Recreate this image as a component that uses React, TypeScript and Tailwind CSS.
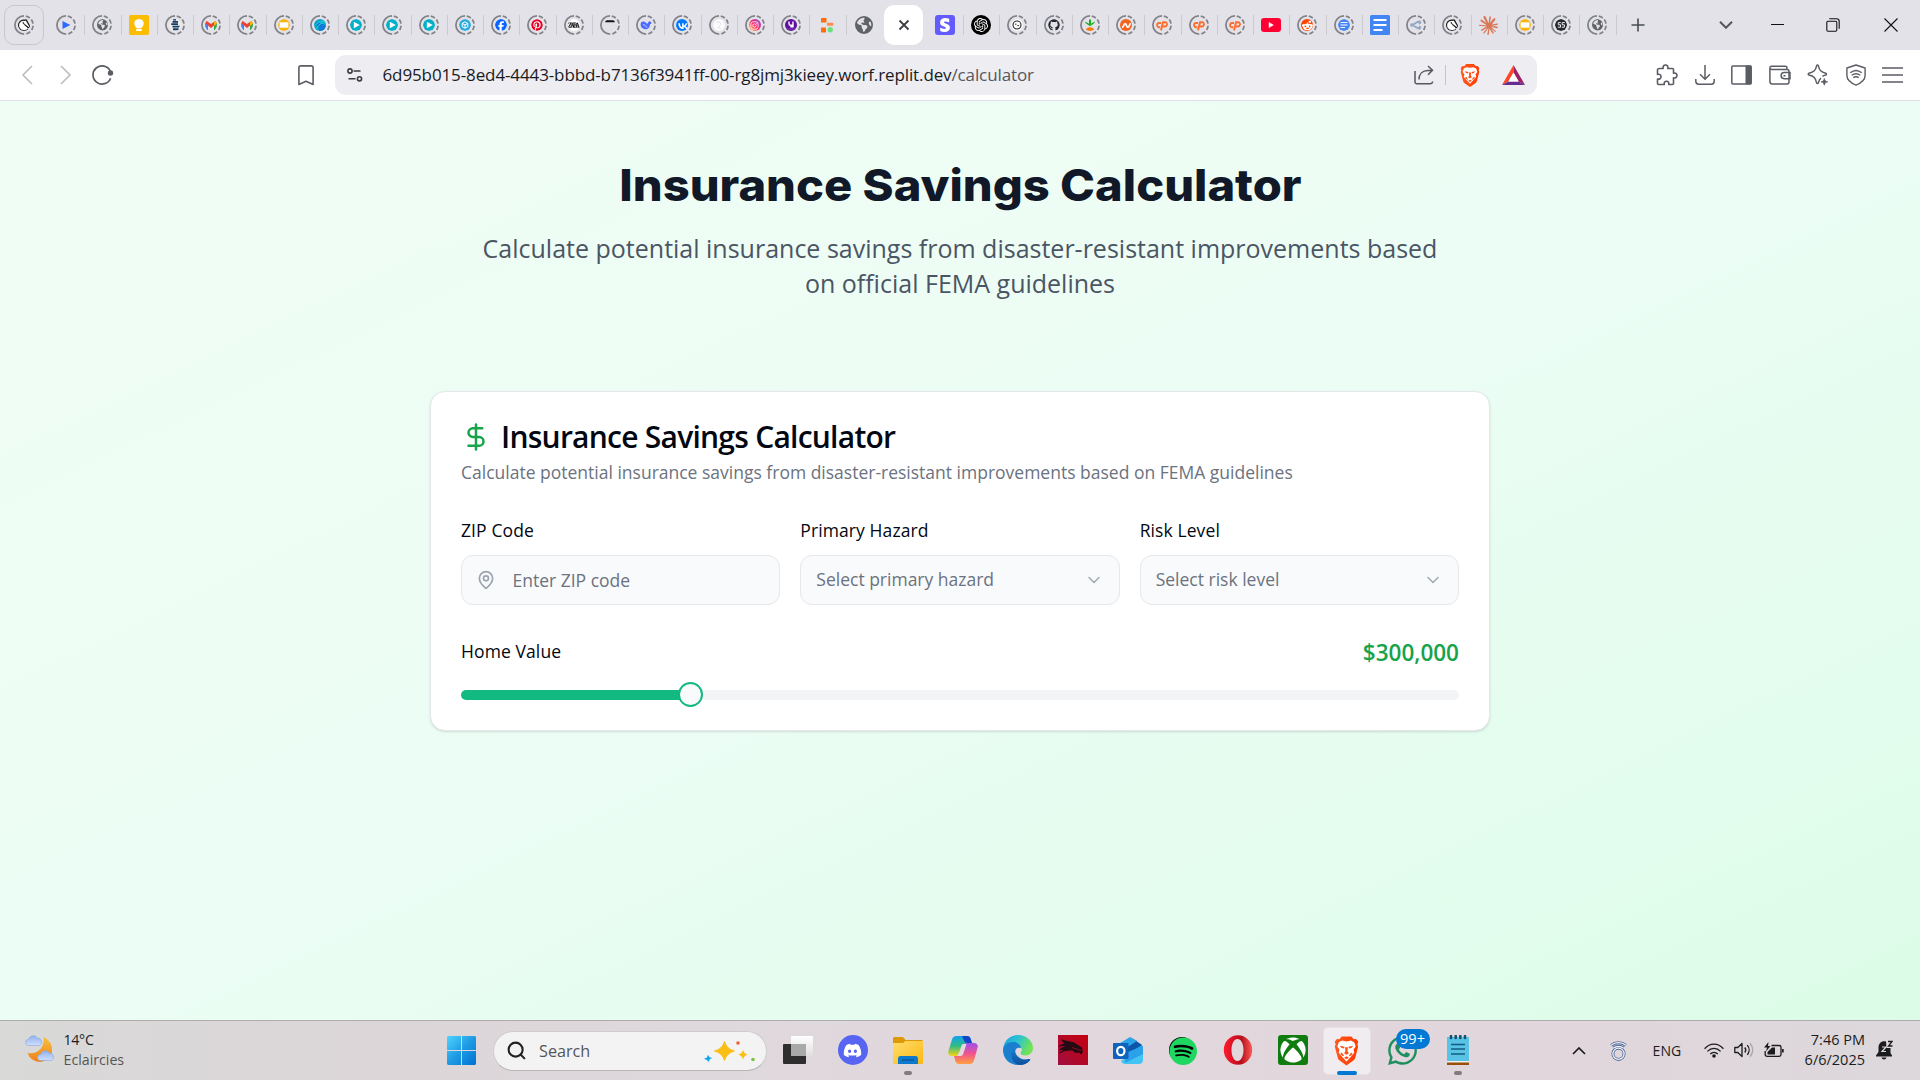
import React, { ReactNode } from "react";
import { ChevronDown, DollarSign, MapPin, Search } from "lucide-react";
import { SiLichess, SiOpenai, SiClaude, SiZara, SiNamecheap, SiVk } from "react-icons/si";
import {
  FaDiscord,
  FaEarthAmericas,
  FaFacebook,
  FaGithub,
  FaPinterest,
  FaRedditAlien,
  FaStripeS,
  FaXbox,
  FaSpotify,
  FaWhatsapp,
  FaInstagram,
} from "react-icons/fa6";

/* ---------- Browser tabs ---------- */

function Sleeping({ children }: { children?: ReactNode }) {
  return (
    <span className="grid size-5 shrink-0 place-items-center">
      <svg viewBox="0 0 20 20" className="size-5 [grid-area:1/1]" fill="none" stroke="#808287" strokeWidth="1.75">
        <path d="M10 .9a9.1 9.1 0 0 0 0 18.2" />
        <path d="M10 .9a9.1 9.1 0 0 1 0 18.2" strokeDasharray="4.4 2.2" strokeDashoffset="-1.8" />
      </svg>
      <span className="grid size-3 place-items-center overflow-hidden rounded-full [grid-area:1/1]">{children}</span>
    </span>
  );
}

const Knight = () => (
  <Sleeping>
    <span className="grid size-3 place-items-center rounded-full bg-white">
      <SiLichess className="size-3 stroke-black stroke-1 text-black" />
    </span>
  </Sleeping>
);

const Gmail = () => (
  <Sleeping>
    <svg viewBox="0 0 24 18" className="h-[9px] w-3">
      <path fill="#4285f4" d="M0 3v13a2 2 0 0 0 2 2h4V8z" />
      <path fill="#34a853" d="M24 3v13a2 2 0 0 1-2 2h-4V8z" />
      <path fill="#ea4335" d="M0 3C0 0 3-1 5 1l7 5 7-5c2-2 5-1 5 2l-1 2-11 9L1 5z" />
      <path fill="#fbbc04" d="M18 2l1-1c2-2 5-1 5 2v2l-6 5z" />
    </svg>
  </Sleeping>
);

const Play = () => (
  <Sleeping>
    <svg viewBox="0 0 12 12" className="size-3">
      <circle cx="6" cy="6" r="6" fill="#00b0c8" />
      <path d="M3.8 2.7v6.6L9.8 6z" fill="#fff" />
    </svg>
  </Sleeping>
);

const Slides = () => (
  <Sleeping>
    <svg viewBox="0 0 12 12" className="size-3">
      <circle cx="6" cy="6" r="6" fill="#f9b30b" />
      <rect x="1.6" y="3.3" width="8.8" height="5.4" fill="#fff" />
    </svg>
  </Sleeping>
);

const CPanel = () => (
  <Sleeping>
    <svg viewBox="0 0 12 12" className="size-3" fill="none" stroke="#ff6c2c" strokeWidth="1.9">
      <path d="M5 4H3.1C1.9 4 1.1 4.900 1 6s.7 2.200 1.700 2.200h1.500M5 11.500 7 3.200h2.200c1.500 0 2.200 1 1.900 2.200S9.900 7.500 8.700 7.500H7" />
    </svg>
  </Sleeping>
);

const Globe = () => (
  <Sleeping>
    <FaEarthAmericas className="size-[11.5px] text-[#5f6368]" />
  </Sleeping>
);

const TABS_BEFORE: ReactNode[] = [
  <Sleeping>
    <svg viewBox="0 0 12 12" className="size-3">
      <path d="M2.500 2v8l7.800-4z" fill="#2b6bff" />
    </svg>
  </Sleeping>,
  <Globe />,
  <svg viewBox="0 0 20 20" className="size-5">
    <rect width="20" height="20" rx="1.800" fill="#fbbc04" />
    <circle cx="10" cy="8.600" r="4.700" fill="#fff" />
    <path d="M7.500 11h5v2h-5zM7.300 13.800h5.400V16H7.300z" fill="#fff" />
  </svg>,
  <Sleeping>
    <svg viewBox="0 0 12 12" className="size-3">
      <rect width="12" height="12" fill="#f0eee2" />
      <path d="M4 0h3v1.400H4zM3.500 2h5.500v1.700H3.500zM2.200 4.300H9V6H2.200zM3.500 6.700H11L9.800 8.400H3.500zM4 9.200h5.500v2H4z" fill="#17386e" />
    </svg>
  </Sleeping>,
  <Gmail />,
  <Gmail />,
  <Slides />,
  <Sleeping>
    <svg viewBox="0 0 12 12" className="size-3">
      <rect width="12" height="12" rx="3" fill="#0ba5d0" />
      <path d="M0 5q6-4 12 2v5H5Q6 7 0 5z" fill="#1279d8" />
      <path d="M2.500 9.500q3-6 8-6M1 6q4-4 9-4" stroke="#21d1cf" fill="none" />
    </svg>
  </Sleeping>,
  <Play />,
  <Play />,
  <Play />,
  <Sleeping>
    <svg viewBox="0 0 12 12" className="size-3">
      <circle cx="6" cy="6" r="6" fill="#29abe2" />
      <path d="m6 2.800 2.800 1.600v3.200L6 9.200 3.200 7.600V4.400zM3.200 4.400 6 6l2.800-1.600M6 6v3.200" fill="none" stroke="#fff" strokeWidth="1" />
    </svg>
  </Sleeping>,
  <Sleeping>
    <span className="grid size-3 place-items-center rounded-full bg-white">
      <FaFacebook className="size-3 text-[#0866ff]" />
    </span>
  </Sleeping>,
  <Sleeping>
    <span className="grid size-3 place-items-center rounded-full bg-white">
      <FaPinterest className="size-3 text-[#e60023]" />
    </span>
  </Sleeping>,
  <Sleeping>
    <span className="grid size-3 place-items-center bg-white">
      <SiZara className="size-3 stroke-black stroke-[0.6] text-black" />
    </span>
  </Sleeping>,
  <Sleeping>
    <svg viewBox="0 0 12 12" className="size-3">
      <path d="M1.200 1.300h9.600v2H1.200z" fill="#111" />
    </svg>
  </Sleeping>,
  <Sleeping>
    <svg viewBox="0 0 12 12" className="size-3">
      <path d="M.6 5C1 2.500 3 2 5 3c1 .5 1.500 1.500 2.500 1.700C8 3 9 3 9.500 2c.5 1 1.500.8 2.500.4 0 2-1 2.600-2 2.900C9.900 8 8.500 10.500 5.500 10.300 2.500 10 .4 8 .6 5z" fill="#4d6bfe" />
      <path d="M3 5.600c2 0 3 2 4 3" stroke="#e3e2e8" strokeWidth=".9" fill="none" />
    </svg>
  </Sleeping>,
  <Sleeping>
    <span className="grid size-3 place-items-center bg-white">
      <SiVk className="size-[14px] text-[#0077ff]" />
    </span>
  </Sleeping>,
  <Sleeping>
    <svg viewBox="0 0 12 12" className="size-3">
      <circle cx="6" cy="6" r="6" fill="#fbfbfc" />
      <path d="M3 3.500 7 3l1 2.500-3 3 3 1" fill="none" stroke="#e3e3e6" strokeWidth="1" />
    </svg>
  </Sleeping>,
  <Sleeping>
    <span className="grid size-3 place-items-center bg-linear-to-tr from-[#ffb72b] via-[#f5196c] to-[#8a35e8]">
      <FaInstagram className="size-[9px] text-white" />
    </span>
  </Sleeping>,
  <Sleeping>
    <svg viewBox="0 0 12 12" className="size-3">
      <rect width="12" height="12" rx="2.500" fill="#5f0f9e" />
      <path d="M4 2.500v2.200c0 1 .7 1.600 1.700 1.600H7.500M8 2.500v5.300H5.300" fill="none" stroke="#fff" strokeWidth="1.400" />
      <path d="M2 10h8" stroke="#8d4bc0" strokeWidth=".7" />
    </svg>
  </Sleeping>,
  <svg viewBox="0 0 14 16" className="h-4 w-3.5 shrink-0">
    <rect x="1" y="1" width="5.500" height="4.500" rx=".6" fill="#ff6c0c" />
    <rect x="7" y="5.700" width="6.300" height="3" rx=".6" fill="#ff8a4a" />
    <rect x="1" y="10.500" width="5" height="5" rx=".6" fill="#ff6c0c" />
    <circle cx="10.200" cy="12.800" r="2.700" fill="#6be07f" />
  </svg>,
  <FaEarthAmericas className="size-[18px] text-[#5f6368]" />,
];

const TABS_AFTER: ReactNode[] = [
  <span className="grid size-5 place-items-center rounded-[3px] bg-[#635bff]">
    <FaStripeS className="size-3.5 text-white" />
  </span>,
  <span className="grid size-5 place-items-center rounded-full bg-black">
    <SiOpenai className="size-3.5 text-white" />
  </span>,
  <Sleeping>
    <svg viewBox="0 0 12 12" className="size-3" fill="none" stroke="#222">
      <circle cx="6" cy="6" r="6" fill="#fff" stroke="none" />
      <circle cx="6" cy="6" r="4" strokeWidth="1.100" />
      <path d="M4 5.200h1.500M6.300 6.600h1.800" strokeWidth=".9" />
    </svg>
  </Sleeping>,
  <Sleeping>
    <FaGithub className="size-3 text-[#24292f]" />
  </Sleeping>,
  <Sleeping>
    <svg viewBox="0 0 12 12" className="size-3">
      <path d="M6 7 5 4.500V.5h2v4zM6 7.300 1.500 4 1 2.500 5.500 5zM6 7.300 10.500 4 11 2.500 6.500 5z" fill="#17b01c" />
      <path d="M1.300 12C2 9.500 3.500 8.300 6 8.300S10 9.500 10.700 12z" fill="#ff7a00" />
    </svg>
  </Sleeping>,
  <Sleeping>
    <span className="grid size-3 place-items-center bg-[#f0641f]">
      <SiNamecheap className="size-[9px] text-white" />
    </span>
  </Sleeping>,
  <CPanel />,
  <CPanel />,
  <CPanel />,
  <svg viewBox="0 0 20 14" className="h-3.5 w-5">
    <rect width="20" height="14" rx="3" fill="#ff0033" />
    <path d="M7.800 4v6l5-3z" fill="#fff" />
  </svg>,
  <Sleeping>
    <span className="grid size-3 place-items-center bg-[#ff4500]">
      <FaRedditAlien className="size-[11px] text-white" />
    </span>
  </Sleeping>,
  <Sleeping>
    <svg viewBox="0 0 12 12" className="size-3">
      <circle cx="6" cy="6" r="6" fill="#4285f4" />
      <path d="M2.500 3.500h7M2.500 6h7M2.500 8.500h4.500" stroke="#fff" strokeWidth="1.200" />
    </svg>
  </Sleeping>,
  <svg viewBox="0 0 20 20" className="size-5">
    <rect width="20" height="20" rx="1.500" fill="#4285f4" />
    <path d="M3.500 5h13M3.500 10h13M3.500 15h9" stroke="#fff" strokeWidth="2.200" />
  </svg>,
  <Sleeping>
    <svg viewBox="0 0 12 12" className="size-3" fill="none" stroke="#93a8c4" strokeWidth="1.800">
      <path d="M11 3H7.500L2.500 6l5 3H11M9 1.200 11.200 3 9 4.800M9 7.200 11.200 9 9 10.800" />
      <circle cx="1.800" cy="6" r=".9" />
    </svg>
  </Sleeping>,
  <Knight />,
  <SiClaude className="size-[19px] text-[#d97757]" />,
  <Slides />,
  <Sleeping>
    <svg viewBox="0 0 12 12" className="size-3">
      <circle cx="6" cy="6" r="6" fill="#23272c" />
      <path d="M5.800 3.600H3.300v2.200h2.200v2.400H2.800M9.800 3.600H7.200v2.200h2.200v2.400H6.700" stroke="#fff" strokeWidth=".9" fill="none" />
    </svg>
  </Sleeping>,
  <Globe />,
];

function TabSlot({ children, divider = true }: { children: ReactNode; divider?: boolean }) {
  return (
    <div className="relative flex h-5 w-[36.25px] shrink-0 items-center justify-center">
      {children}
      {divider && <span className="absolute -right-px top-0 h-5 w-px bg-[#c9c9ce]" />}
    </div>
  );
}

function TabStrip() {
  return (
    <div className="flex h-[50px] items-center bg-[#e3e2e8]">
      <div className="ml-1 mr-[4.5px] flex h-10 w-[39.5px] shrink-0 items-center justify-center rounded-[10px] border border-[#c8c8cc]">
        <Knight />
      </div>
      {TABS_BEFORE.map((t, i) => (
        <TabSlot key={i} divider={i < TABS_BEFORE.length - 1}>
          {t}
        </TabSlot>
      ))}
      <div className="ml-[2px] mr-[3.5px] flex h-10 w-[39.5px] shrink-0 items-center justify-center rounded-[10px] bg-white">
        <svg viewBox="0 0 12 12" className="size-3" stroke="#3b3d42" strokeWidth="1.800">
          <path d="m1.500 1.500 9 9M10.500 1.500l-9 9" />
        </svg>
      </div>
      {TABS_AFTER.map((t, i) => (
        <TabSlot key={i}>{t}</TabSlot>
      ))}
      <svg viewBox="0 0 14 14" className="ml-[15.5px] size-3.5 shrink-0" stroke="#4a4d52" strokeWidth="1.600">
        <path d="M7 .5v13M.5 7h13" />
      </svg>
      <div className="ml-auto mr-[22px] flex items-center">
        <svg viewBox="0 0 14 8" className="mr-[37.5px] h-2 w-3.5" fill="none" stroke="#55585d" strokeWidth="2">
          <path d="m1 .8 6 6 6-6" />
        </svg>
        <svg viewBox="0 0 13 13" className="mr-[42.5px] size-[13px]" stroke="#111" strokeWidth="1">
          <path d="M0 5.500h13" />
        </svg>
        <svg viewBox="0 0 14 14" className="mr-[44px] size-3.5" fill="none" stroke="#111" strokeWidth="1.100">
          <rect x=".8" y="3.200" width="10" height="10" rx="1.200" />
          <path d="M3.300.8h7.200a2.700 2.700 0 0 1 2.700 2.700v7.200" />
        </svg>
        <svg viewBox="0 0 14 14" className="size-3.5" stroke="#111" strokeWidth="1.100">
          <path d="m.5.5 13 13M13.500.5l-13 13" />
        </svg>
      </div>
    </div>
  );
}

/* ---------- Address bar ---------- */

function BraveLion({ className }: { className?: string }) {
  return (
    <svg viewBox="0 0 26 30" className={className}>
      <defs>
        <linearGradient id="lion" x1="0" x2="1">
          <stop offset="0" stopColor="#ff5a1f" />
          <stop offset="1" stopColor="#ff3a00" />
        </linearGradient>
      </defs>
      <path d="M8 0h10l2.600 2.800 2.400-.3 2.300 3-1 2.300.8 2.700-3 11.500c-.4 1.500-1 2.300-2 3L13 30l-7.100-5c-1-.7-1.600-1.500-2-3L.9 10.500l.8-2.700-1-2.300 2.300-3 2.400.3z" fill="url(#lion)" />
      <path d="m8.500 4.200 4.500.8 4.500-.8 3.500 1.600 1.600 4.600-2.300 3 .8 3.300-3.800 4.600-4.300 4.500-4.300-4.500-3.800-4.600.8-3.300-2.300-3L5 5.800z" fill="#fff" />
      <path d="m6 9.500 5 1-.6 1.800-2.500-.5zM20 9.500l-5 1 .6 1.800 2.500-.5zM11.500 11h3l-.4 4.200 1.400 2.200L13 19l-2.500-1.600 1.400-2.200zM8 16.500l2.500 3.300-1.200.7L6.500 18zM18 16.500l-2.500 3.300 1.200.7 2.800-2.500zM13 20.500l2.500 1.400L13 23.500l-2.500-1.600z" fill="#ff5117" />
    </svg>
  );
}

function Toolbar() {
  return (
    <div className="flex h-[51px] items-center border-b border-[#dfdfe5] bg-white">
      <svg viewBox="0 0 12 20" className="ml-[21px] h-5 w-3 shrink-0" fill="none" stroke="#bcbdc2" strokeWidth="1.600">
        <path d="M11 1 2 10l9 9" />
      </svg>
      <svg viewBox="0 0 12 20" className="ml-[27px] h-5 w-3 shrink-0" fill="none" stroke="#bcbdc2" strokeWidth="1.600">
        <path d="m1 1 9 9-9 9" />
      </svg>
      <svg viewBox="0 0 22 20" className="ml-5 h-5 w-[22px] shrink-0" fill="none" stroke="#5b5d64" strokeWidth="1.700">
        <path d="M18.300 6A9.100 9.100 0 1 0 18.600 13.200" />
        <circle cx="18.500" cy="8" r="2.700" fill="#5b5d64" stroke="none" />
      </svg>
      <svg viewBox="0 0 16 21" className="ml-[184px] h-[21px] w-4 shrink-0" fill="none" stroke="#5b5d64" strokeWidth="1.600">
        <path d="M.9 19.500V2.800C.9 1.600 1.600.9 2.800.9h10.400c1.200 0 1.900.7 1.900 1.900v16.700L8 16.300z" strokeLinejoin="round" />
      </svg>
      <div className="ml-[21px] flex h-10 w-[1202px] shrink-0 items-center rounded-[11px] bg-[#ededf2]">
        <svg viewBox="0 0 16 14" className="ml-3 h-3.5 w-4" fill="none" stroke="#3b3d42" strokeWidth="1.600">
          <circle cx="3" cy="3" r="2.100" />
          <path d="M6.500 3h7M1.500 10.800h7" />
          <circle cx="12.500" cy="10.800" r="2.100" />
        </svg>
        <div className="ml-[19.5px] whitespace-nowrap text-[17px] leading-6 tracking-[-0.115px] text-[#1a1b1f]">
          6d95b015-8ed4-4443-bbbd-b7136f3941ff-00-rg8jmj3kieey.worf.replit.dev
          <span className="text-[#55575e]">/calculator</span>
        </div>
        <div className="ml-auto mr-[12px] flex items-center">
          <svg viewBox="0 0 20 20" className="mr-[11px] h-5 w-5" fill="none" stroke="#55585e" strokeWidth="1.500">
            <path d="M1 6v11c0 1 .7 1.700 1.700 1.700H16c1.500 0 2.500-.8 2.700-2.200M5 14.500C5 9 8.500 5.500 14 5.500h4M14 1l4.500 4.300L14 9.800" />
          </svg>
          <span className="mr-3.5 h-5 w-px bg-[#c4c5cb]" />
          <BraveLion className="mr-[22px] h-[23px] w-5" />
          <svg viewBox="0 0 23 20" className="h-5 w-[23px]">
            <path d="M11.500 0 0 20l6.500-3.500 5-9z" fill="#ff4724" />
            <path d="M11.500 0 23 20l-6.500-3.500-5-9z" fill="#9e1f63" />
            <path d="m0 20 6.500-3.500h10L23 20z" fill="#662d91" />
            <path d="m11.500 7.500 5.200 9H6.300z" fill="#fff" />
          </svg>
        </div>
      </div>
      <div className="ml-auto mr-[17px] flex w-[247px] items-center justify-between">
        <svg viewBox="0 0 22 22" className="size-[22px]" fill="none" stroke="#5b5d64" strokeWidth="1.600" strokeLinejoin="round">
          <path d="M3.500 4.500h3.700c-.6-2 .5-3.500 2.300-3.500s2.900 1.500 2.300 3.500h4.700c.7 0 1 .3 1 1v3.700c2-.5 3.500.5 3.500 2.300s-1.500 2.800-3.500 2.300v5.700c0 .7-.3 1-1 1h-3.800c.6-1.800-.4-3.200-2.200-3.200s-2.800 1.400-2.200 3.200H2.500c-.7 0-1-.3-1-1V15c2 .6 3.500-.5 3.500-2.300s-1.500-2.800-3.500-2.300V5.500c0-.7.300-1 2-1z" />
        </svg>
        <svg viewBox="0 0 20 20" className="size-5" fill="none" stroke="#5b5d64" strokeWidth="1.500">
          <path d="M10 0v14M5 9.200l5 5 5-5M.8 14v2.300c0 1.700 1.200 2.900 2.900 2.900h12.600c1.700 0 2.900-1.200 2.900-2.900V14" />
        </svg>
        <svg viewBox="0 0 21 20" className="h-5 w-[21px]">
          <rect x=".8" y=".9" width="19.400" height="18" rx="1" fill="#fff" stroke="#5b5d64" strokeWidth="1.500" />
          <path d="M14.500.5h5.700v18.800h-5.700z" fill="#5b5d64" />
        </svg>
        <svg viewBox="0 0 22 20" className="h-5 w-[22px]" fill="none" stroke="#5b5d64" strokeWidth="1.500">
          <path d="M18 4V2.800c0-1-.6-1.600-1.600-1.600H2.600C1.600 1.200.9 1.900.9 2.800s.7 1.700 1.700 1.700H18c1.300 0 2 .8 2 2v10.400c0 1.300-.7 2-2 2H3.200c-1.400 0-2.300-.9-2.300-2.400V3" />
          <path d="M21 7.500h-5.800a3.100 3.100 0 0 0 0 6.200H21zM14.500 10.700h2" />
        </svg>
        <svg viewBox="0 0 22 22" className="size-[22px]" fill="none" stroke="#5b5d64" strokeWidth="1.500" strokeLinejoin="round">
          <path d="M14 14.200c-1.300.9-2 2.300-2.600 4.600-.4 1-1.400 1-1.800 0C8.500 13.800 7 12 2 11c-1-.3-1-1.400 0-1.700C7 8 8.500 6.500 9.600 1.800c.4-1 1.400-1 1.800 0C12.500 6.500 14 8 18.700 9.300c1 .3 1 1.400 0 1.700-1.500.4-2.500.8-3.300 1.300" />
          <path d="M17.300 14.500c.5 2.200 1.200 2.900 3.400 3.300-2.200.5-2.900 1.200-3.400 3.400-.5-2.200-1.200-2.900-3.300-3.400 2.100-.4 2.800-1.100 3.300-3.300z" fill="#5b5d64" strokeWidth=".8" />
        </svg>
        <svg viewBox="0 0 20 22" className="h-[22px] w-5" fill="none" stroke="#5b5d64" strokeWidth="1.400">
          <path d="M10 1 .9 4v7.500c0 4.500 4 7.500 9.100 9.600 5.100-2.100 9.100-5.100 9.100-9.600V4z" strokeLinejoin="round" />
          <path d="M4.300 8.800c3.500-2.900 7.900-2.900 11.400 0M5.700 11.300c2.700-2 5.900-2 8.600 0M7.300 13.700c1.800-1.200 3.600-1.200 5.400 0" />
        </svg>
        <svg viewBox="0 0 21 18" className="h-[18px] w-[21px]" stroke="#5b5d64" strokeWidth="1.600">
          <path d="M0 2h21M0 9h21M0 16h21" />
        </svg>
      </div>
    </div>
  );
}

/* ---------- Page ---------- */

function Label({ children }: { children: ReactNode }) {
  return (
    <div className="text-[17.5px] font-medium leading-[25px] tracking-[0.1px] text-[#030712]">{children}</div>
  );
}

function SelectField({ label, placeholder }: { label: string; placeholder: string }) {
  return (
    <div className="flex flex-col gap-3">
      <Label>{label}</Label>
      <div className="flex h-[50px] items-center justify-between rounded-xl border border-gray-200 bg-[#f9fafb] px-[15px] text-[17.5px] leading-[25px] text-[#6b7280]">
        <span className="pb-[2px]">{placeholder}</span>
        <ChevronDown className="size-5 opacity-60" strokeWidth={1.8} />
      </div>
    </div>
  );
}

function Page() {
  const percent = 22.97;
  return (
    <main className="flex h-[919px] flex-col items-center bg-[linear-gradient(to_bottom_right,#f0fdf4,#ecfdf5_50%,#dcfce7)] bg-[#ecfdf5]">
      <h1 className="mt-[59px] scale-x-[1.058] font-['Inter'] text-[44.5px] font-extrabold leading-[50px] text-[#111827]">
        Insurance Savings Calculator
      </h1>
      <p className="mt-[21px] w-[960px] text-center text-[25px] leading-[35px] text-[#4b5563]">
        Calculate potential insurance savings from disaster-resistant improvements based on official FEMA guidelines
      </p>
      <section className="mt-[90px] h-[340px] w-[1060px] rounded-[15px] border border-gray-200 bg-white px-[30px] pt-[30px] shadow-sm">
        <div className="flex items-center gap-2.5">
          <DollarSign className="size-[30px] text-[#16a34a]" strokeWidth={2} />
          <h2 className="text-[30px] font-semibold leading-[30px] tracking-[-0.75px] text-[#030712]">
            Insurance Savings Calculator
          </h2>
        </div>
        <p className="mt-[7.5px] text-[17.5px] leading-[25px] text-[#6b7280]">
          Calculate potential insurance savings from disaster-resistant improvements based on FEMA guidelines
        </p>
        <div className="mt-[33.5px] grid grid-cols-3 gap-5">
          <div className="flex flex-col gap-3">
            <Label>ZIP Code</Label>
            <div className="flex h-[50px] items-center rounded-xl border border-gray-200 bg-[#f9fafb] pl-3.5 text-[17.5px] leading-[25px] text-[#6b7280]">
              <MapPin className="mr-[16.5px] size-5 text-[#9ca3af]" />
              <span>Enter ZIP code</span>
            </div>
          </div>
          <SelectField label="Primary Hazard" placeholder="Select primary hazard" />
          <SelectField label="Risk Level" placeholder="Select risk level" />
        </div>
        <div className="mt-[30px] flex h-[35px] items-center justify-between">
          <div className="pb-[2px]">
            <Label>Home Value</Label>
          </div>
          <span className="text-[22.5px] font-semibold leading-[35px] text-[#16a34a]">$300,000</span>
        </div>
        <div className="mt-[12px] flex h-[25px] items-center">
          <div className="h-2.5 rounded-l-full bg-[#12b981]" style={{ width: `calc(${percent}% - 10px)` }} />
          <div className="relative z-10 -mx-0.5 size-[25px] shrink-0 rounded-full border-2 border-[#12b981] bg-[#f9fafb]" />
          <div className="h-2.5 grow rounded-r-full bg-[#f3f4f6]" />
        </div>
      </section>
    </main>
  );
}

/* ---------- Taskbar ---------- */

function App55({ children, mark }: { children: ReactNode; mark?: boolean }) {
  return (
    <div className="relative flex h-[58px] w-[55px] shrink-0 items-center justify-center">
      {children}
      {mark && <span className="absolute bottom-[5px] left-1/2 h-1 w-2 -translate-x-1/2 rounded-full bg-[#807c80]" />}
    </div>
  );
}

function Taskbar() {
  return (
    <footer className="flex h-[60px] items-center border-t border-[#aeadad] bg-[linear-gradient(90deg,#d9d9d8,#dcd6d9_20%,#ded8dc_35%,#e1d7dc_55%,#e1d6db_80%,#dcd8dc)]">
      <div className="flex w-[447px] shrink-0 items-center pl-[25px]">
        <svg viewBox="0 0 30 29" className="mb-1 h-[29px] w-[30px]">
          <defs>
            <linearGradient id="moon" x1="0" y1="1" x2="0" y2="0">
              <stop offset="0" stopColor="#f07f1c" />
              <stop offset="1" stopColor="#f6c23c" />
            </linearGradient>
            <linearGradient id="cloud" x1="0" y1="0" x2="0" y2="1">
              <stop offset="0" stopColor="#8fb1ee" />
              <stop offset="1" stopColor="#cfdffb" />
            </linearGradient>
          </defs>
          <path d="M18.500 3A13.500 13.500 0 0 1 27 18 13 13 0 0 1 15 28 13 13 0 0 1 2.500 19c9 2 17.500-4.500 16-16z" fill="url(#moon)" />
          <path d="M3.500 11.500a3 3 0 0 1 0-6 5 5 0 0 1 9-1.500 4 4 0 0 1 2 7.500z" fill="url(#cloud)" stroke="#86a6e2" strokeWidth=".6" />
          <path d="M15.500 26.500a3 3 0 0 1 0-6 5 5 0 0 1 9-1.500 4 4 0 0 1 2 7.500z" fill="url(#cloud)" stroke="#86a6e2" strokeWidth=".6" />
        </svg>
        <div className="mb-[2px] ml-[8.5px] text-[14.2px] leading-5 text-[#1c1c1c]">
          <div className="tracking-[-0.3px]">14°C</div>
          <div className="text-[#555]">Eclaircies</div>
        </div>
      </div>
      <svg viewBox="0 0 29 29" className="mb-px size-[29px] shrink-0">
        <defs>
          <linearGradient id="win" x1="0" y1="0" x2="1" y2="1">
            <stop offset="0" stopColor="#4fd3ff" />
            <stop offset=".5" stopColor="#1e9be4" />
            <stop offset="1" stopColor="#0071d3" />
          </linearGradient>
        </defs>
        <path d="M1 0h13v14H0V1zM15 0h13l1 1v13H15zM0 15h14v14H1l-1-1zM15 15h14v13l-1 1H15z" fill="url(#win)" />
      </svg>
      <div className="ml-[17px] flex h-10 w-[274px] shrink-0 items-center rounded-full border border-[#cfccce] border-b-[#b9b6b8] bg-[#f4f3f4] pl-[12px] pr-[10px]">
        <Search className="size-[21px] text-[#222]" strokeWidth={2.4} />
        <span className="ml-[12px] text-[16.2px] leading-6 text-[#55555a]">Search</span>
        <svg viewBox="0 0 52 22" className="ml-auto h-[22px] w-[52px]">
          <path d="M20.500 1.500Q22.500 9 30.500 11 22.500 13 20.500 20.500 18.500 13 10.500 11 18.500 9 20.500 1.500z" fill="#fbbf14" stroke="#fbbf14" strokeLinejoin="round" />
          <path d="M39 10q1 3.500 4.800 4.600Q40 15.700 39 19.500q-1-3.800-4.800-4.900Q38 13.500 39 10z" fill="#fbbf14" />
          <path d="M3.800 14.800 5.500 17.300 8.300 18 5.600 19.300 5 22 2.800 20 0 18.800 3 17.500z" fill="#09a7f0" />
          <circle cx="34" cy="3" r="1.800" fill="#f2602f" />
          <circle cx="49" cy="19.500" r="1.800" fill="#7cc243" />
        </svg>
      </div>
      <div className="ml-[3px] flex shrink-0">
        <App55>
          <svg viewBox="0 0 30 28" className="mb-px h-7 w-[30px]">
            <defs>
              <linearGradient id="tv" x1="0" y1="0" x2="0" y2="1">
                <stop offset="0" stopColor="#fff" />
                <stop offset="1" stopColor="#dedede" />
              </linearGradient>
            </defs>
            <rect y="8" width="23" height="20" rx="1" fill="#2e2e2e" />
            <rect x="8" width="22" height="20" rx="1" fill="url(#tv)" />
            <path d="M8 8h15v12H8z" fill="#a9a9a9" />
          </svg>
        </App55>
        <App55>
          <span className="mb-px grid size-[30px] place-items-center rounded-full bg-[#5865f2]">
            <FaDiscord className="size-[19px] text-white" />
          </span>
        </App55>
        <App55 mark>
          <svg viewBox="0 0 30 27" className="mb-px h-[27px] w-[30px]">
            <defs>
              <linearGradient id="folder" x1="0" y1="0" x2="1" y2="1">
                <stop offset="0" stopColor="#ffdd6b" />
                <stop offset="1" stopColor="#fcb813" />
              </linearGradient>
            </defs>
            <path d="M0 1.500C0 .7.700 0 1.500 0H10l2.500 3H28.500c.8 0 1.500.7 1.500 1.500V10H0z" fill="#dd9a08" />
            <path d="M0 6h10l2.500-2H30v21.500c0 .8-.7 1.500-1.500 1.500h-27C.7 27 0 26.300 0 25.500z" fill="url(#folder)" />
            <path d="M5 27v-5.500c0-1.400 1-2.500 2.500-2.500h15c1.500 0 2.500 1.100 2.500 2.500V27z" fill="#0f79cb" />
            <path d="M9 23h12" stroke="#0a4b87" />
          </svg>
        </App55>
        <App55>
          <svg viewBox="0 0 30 28" className="mb-px h-7 w-[30px]">
            <defs>
              <linearGradient id="cpA" x1="0" y1="0" x2="0" y2="1">
                <stop offset="0" stopColor="#10a4ec" />
                <stop offset=".5" stopColor="#30bb83" />
                <stop offset="1" stopColor="#f7d415" />
              </linearGradient>
              <linearGradient id="cpB" x1="0" y1="0" x2="0" y2="1">
                <stop offset="0" stopColor="#9b51ed" />
                <stop offset=".5" stopColor="#f0538f" />
                <stop offset="1" stopColor="#ffa041" />
              </linearGradient>
            </defs>
            <path d="M8.500 0H19c2 0 3 1 3.500 2.500L24 7h-4c-2 0-3 1-3.500 2.500L15 15h-3L9 20H4c-3 0-4.500-2-3.500-5L4 3.500C4.700 1.200 6 0 8.500 0z" fill="url(#cpA)" />
            <path d="M14 0h5c2 0 3 1 3.500 2.500L24 7h-4.500c-2 0-3-1-3.500-2.500z" fill="#1545c7" />
            <path d="M21.500 28H11c-2 0-3-1-3.500-2.500L6 20h4c2 0 3-1 3.500-2.500L17 7h9c3 0 4.500 2 3.500 5L26 24.500c-.7 2.300-2 3.500-4.500 3.500z" fill="url(#cpB)" />
            <path d="m13.500 9.500-3 9c-.4 1-1 1.500-1.500 1.500h1c4 0 4.500 0 5.500-3l3-9h-2.500c-1.500 0-2 .5-2.500 1.500z" fill="#e3d9de" />
          </svg>
        </App55>
        <App55>
          <svg viewBox="0 0 30 30" className="mb-px size-[30px]">
            <defs>
              <linearGradient id="edA" x1="0" y1="0" x2="1" y2=".4">
                <stop offset="0" stopColor="#1c9fde" />
                <stop offset=".5" stopColor="#2bc3d2" />
                <stop offset="1" stopColor="#70e454" />
              </linearGradient>
              <linearGradient id="edB" x1="0" y1="0" x2="0" y2="1">
                <stop offset="0" stopColor="#1a88d8" />
                <stop offset="1" stopColor="#0d4f9c" />
              </linearGradient>
            </defs>
            <path d="M.2 13C1.500 5 7.500 0 15 0c8.500 0 15 6.200 15 13 0 4.500-3.500 7.500-7.500 7.500-3 0-5-1-5-2.200 0-.8 1.300-1.500 1.300-3.800C18.800 10.500 15 8 11 8 6 8 2 10 .2 13z" fill="url(#edA)" />
            <path d="M0 15c0-4.500 4.500-8 10-8 4 0 8 2.500 8.500 6.500-1-1.500-6.500-1.500-6.500 4 0 5.500 6 9.500 14 6.500 1-.4 1.600.3 1 1.200C24 28.500 19.500 30 15 30 6.500 30 0 23.500 0 15z" fill="#1b7fd0" />
            <path d="M8.500 19.500c0-4 2.500-7.500 5.500-8.500-2 2-2.500 5-1 8 2.300 4.500 7.500 6.500 13 5 1-.4 1.600.3 1 1.200C24 28.500 20.500 30 17.500 30 12 29.500 8.500 25 8.500 19.500z" fill="url(#edB)" />
          </svg>
        </App55>
        <App55>
          <svg viewBox="0 0 30 30" className="mb-px size-[30px]">
            <defs>
              <linearGradient id="drag" x1="0" y1="1" x2="1" y2="0">
                <stop offset="0" stopColor="#a10f3f" />
                <stop offset="1" stopColor="#c4000e" />
              </linearGradient>
            </defs>
            <rect width="30" height="30" fill="url(#drag)" />
            <path d="M3 4c3 1.500 6 1.500 9 2.500 4 .5 6 2 8 3.500l4 2.500.8 4.500-1.500 2.500-2.500-2-3.500.5-3-2.500c-5-.5-9.500.5-13.300 3.500.5-2 2.500-3 4.500-4-1.700-.5-3 0-4.500 1 1-3 3.500-4 6-4.500C5 10.500 3 11.500 0 12c2-2 4-3 6.500-3.500C5 7.500 4 6 3 4z" fill="#240a12" />
            <path d="m14 12.500 9 3" stroke="#a01028" strokeWidth=".8" />
          </svg>
        </App55>
        <App55>
          <svg viewBox="0 0 30 27" className="h-[27px] w-[30px]">
            <path d="M4 8 17 0l12 8v6H4z" fill="#2aa5ea" />
            <path d="m17 0 12 8-13 8-6-3 14-9z" fill="#0c55a8" />
            <path d="M30 9v14c0 2-1.500 4-4 4H12c-2 0-3-1-4-3z" fill="#43c4f5" />
            <path d="m12 16 18-7v8L12 26z" fill="#2aa1e8" />
            <rect y="6" width="15.500" height="16" rx="1" fill="#0f62bd" />
            <ellipse cx="7.800" cy="14" rx="3.700" ry="4.200" fill="none" stroke="#fff" strokeWidth="2.200" />
          </svg>
        </App55>
        <App55>
          <span className="mb-px mr-px grid size-[26px] place-items-center rounded-full bg-black">
            <FaSpotify className="size-[28.5px] text-[#1ed760]" />
          </span>
        </App55>
        <App55>
          <svg viewBox="0 0 30 30" className="mb-px size-[30px]">
            <defs>
              <linearGradient id="op" x1="0" y1="0" x2="1" y2="0">
                <stop offset="0" stopColor="#ff1b2d" />
                <stop offset=".55" stopColor="#c20c1f" />
                <stop offset=".62" stopColor="#b3121a" />
                <stop offset="1" stopColor="#ff5a5a" />
              </linearGradient>
            </defs>
            <path d="M15 .3a14.200 14.700 0 1 0 0 29.400 14.200 14.700 0 1 0 0-29.400zM14.500 4c3.500 0 6 4.900 6 11s-2.500 11-6 11-6-4.900-6-11 2.500-11 6-11z" fillRule="evenodd" fill="url(#op)" />
          </svg>
        </App55>
        <App55>
          <span className="mb-px grid size-[30px] place-items-center rounded-[3px] bg-[#107c10]">
            <FaXbox className="size-[26px] text-white" />
          </span>
        </App55>
        <App55>
          <span className="relative -left-px grid h-12 w-12 place-items-center rounded-[5px] border border-[#e6e1e4] bg-[#f0ecef]">
            <BraveLion className="h-[30px] w-[25px]" />
            <span className="absolute -bottom-px h-1 w-5 rounded-full bg-[#0078d4]" />
          </span>
        </App55>
        <App55>
          <FaWhatsapp className="size-[33px] text-[#1f8f5f]" />
          <span className="absolute left-[20.5px] top-[7px] flex h-5 w-[34px] items-center justify-center rounded-full bg-[#0078d4] text-[14.5px] leading-5 text-white">
            99+
          </span>
        </App55>
        <App55 mark>
          <svg viewBox="0 0 22 30" className="mb-px h-[30px] w-[22px]">
            <path d="M0 2h22v25H0z" fill="#58c3e4" />
            <path d="M0 27h22v3H0z" fill="#9a4f08" />
            <path d="M0 26h22v1.500H0z" fill="#f0efec" />
            <path d="M4 9.500h14M4 14h14M4 19h14" stroke="#135c80" strokeWidth="1.600" />
            <path d="M4 1v2M8.700 1v2M13.300 1v2M18 1v2" stroke="#17506c" strokeWidth="2.600" strokeLinecap="round" />
          </svg>
        </App55>
      </div>
      <div className="ml-auto flex shrink-0 items-center pr-[27px] text-[14.5px] text-[#1c1c1c]">
        <svg viewBox="0 0 14 8" className="mr-6 h-2 w-3.5" fill="none" stroke="#1c1c1c" strokeWidth="1.700">
          <path d="m1 7 6-6 6 6" />
        </svg>
        <svg viewBox="0 0 17 20" className="mr-[26px] h-5 w-[17px]" fill="none">
          <g stroke="#4d6796" strokeWidth="3">
            <circle cx="8.500" cy="12.800" r="5.600" />
            <path d="M1.200 4.300c4-3.500 10.600-3.500 14.600 0M3.500 7c3-2 7-2 10 0" />
          </g>
          <g stroke="#f3f5fa" strokeWidth="1.300">
            <circle cx="8.500" cy="12.800" r="5.600" />
            <path d="M1.200 4.300c4-3.500 10.600-3.500 14.600 0M3.500 7c3-2 7-2 10 0" />
          </g>
        </svg>
        <span className="mr-[22.5px] text-[14px] leading-5">ENG</span>
        <svg viewBox="0 0 20 15" className="mb-px mr-[10px] h-[15px] w-5" fill="none" stroke="#1c1c1c" strokeWidth="1.300">
          <path d="M.6 5.700C6-.3 14-.3 19.400 5.700M3.400 8.400c3.900-4 9.300-4 13.200 0M6.200 11c2.300-2.300 5.300-2.300 7.600 0" />
          <circle cx="10" cy="13" r="1.800" fill="#1c1c1c" stroke="none" />
        </svg>
        <svg viewBox="0 0 20 16" className="mb-px mr-[10px] h-4 w-5" fill="none" stroke="#1c1c1c" strokeWidth="1.300">
          <path d="M.8 5.500v5h3l4.200 4V1.500l-4.200 4z" strokeLinejoin="round" />
          <path d="M10.800 5.500c1.200 1.500 1.200 3.500 0 5M13.300 3.200c2.400 2.800 2.400 6.800 0 9.600" />
          <path d="M16 1.200c3.600 4 3.600 9.600 0 13.600" stroke="#aaa5a8" />
        </svg>
        <svg viewBox="0 0 20 16" className="mb-px mr-[21px] h-4 w-5" fill="none" stroke="#1c1c1c" strokeWidth="1.300">
          <path d="M7.500 3.500h7.700c1 0 1.800.8 1.800 1.800v7.200c0 1-.8 1.800-1.800 1.800H3c-1 0-1.800-.8-1.800-1.800V9" />
          <path d="M18 7v3.500h1.700V7z" fill="#1c1c1c" stroke="none" />
          <path d="M8 5.500h3v7H3.500V10z" fill="#1c1c1c" stroke="none" />
          <path d="M4.500 0 0 5.500h3L2 9.500l4.500-5.500H4z" fill="#1c1c1c" stroke="none" />
        </svg>
        <div className="mb-[2px] text-right leading-5 text-[#1c1c1c]">
          <div>7:46 PM</div>
          <div>6/6/2025</div>
        </div>
        <svg viewBox="0 0 17 20" className="mb-px ml-[11px] h-5 w-[17px]">
          <path d="M10 1.500C5.500.5 2.500 3.500 2.500 7.500V12L0 15.500V16.500h16V15.500L14.500 13V8h-4z" fill="#1c1c1c" />
          <path d="M5.500 17.500h5c-.5 2.500-4.500 2.500-5 0z" fill="#1c1c1c" />
          <path d="M6 7h4l-4 4.500h4" stroke="#ddd8dc" strokeWidth="1.200" fill="none" />
          <path d="M12 1.500h4L12.500 6H16.500" stroke="#1c1c1c" strokeWidth="1.300" fill="none" />
        </svg>
      </div>
    </footer>
  );
}

export default function App() {
  return (
    <div className="flex h-[1080px] w-[1920px] flex-col overflow-hidden font-['Open_Sans',sans-serif]">
      <TabStrip />
      <Toolbar />
      <Page />
      <Taskbar />
    </div>
  );
}
